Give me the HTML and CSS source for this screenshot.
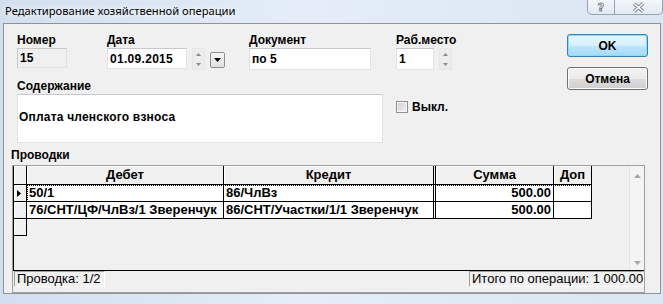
FILE: index.html
```html
<!DOCTYPE html>
<html lang="ru">
  <head>
    <meta charset="UTF-8" />
    <title>Редактирование хозяйственной операции</title>
    <link rel="stylesheet" href="styles.css">
  </head>
  <body>
    <div class="window">
      <div class="titlebar">
        <span class="title">Редактирование хозяйственной операции</span>
        <div class="caption-btns">
          <span class="cap-btn help">?</span>
          <span class="cap-btn close">
            <svg width="13" height="11" viewBox="0 0 13 11">
              <path d="M2 1.5 L11 9.5 M11 1.5 L2 9.5" stroke="#7b8694" stroke-width="3.6" fill="none"/>
              <path d="M2 1.5 L11 9.5 M11 1.5 L2 9.5" stroke="#fff" stroke-width="1.6" fill="none"/>
            </svg>
          </span>
        </div>
      </div>

      <div class="client">
        <div class="head">
          <div class="fields">
            <div class="row-top">
              <div class="field f-num">
                <div class="lbl">Номер</div>
                <div class="box disabled">15</div>
              </div>
              <div class="field f-date">
                <div class="lbl">Дата</div>
                <div class="box">01.09.2015</div>
              </div>
              <div class="spin">
                <span class="spin-btn"><svg width="5" height="3" viewBox="0 0 5 3"><path d="M0 3 L2.5 0 L5 3Z" fill="#8a8a8a"/></svg></span>
                <span class="spin-btn"><svg width="5" height="3" viewBox="0 0 5 3"><path d="M0 0 L5 0 L2.5 3Z" fill="#8a8a8a"/></svg></span>
              </div>
              <div class="drop">
                <svg width="7" height="4" viewBox="0 0 7 4"><path d="M0 0 L7 0 L3.5 4Z" fill="#000"/></svg>
              </div>
              <div class="field f-doc">
                <div class="lbl">Документ</div>
                <div class="box">по 5</div>
              </div>
              <div class="field f-place">
                <div class="lbl">Раб.место</div>
                <div class="box">1</div>
              </div>
              <div class="spin">
                <span class="spin-btn"><svg width="5" height="3" viewBox="0 0 5 3"><path d="M0 3 L2.5 0 L5 3Z" fill="#8a8a8a"/></svg></span>
                <span class="spin-btn"><svg width="5" height="3" viewBox="0 0 5 3"><path d="M0 0 L5 0 L2.5 3Z" fill="#8a8a8a"/></svg></span>
              </div>
            </div>
            <div class="row-content">
              <div class="field f-content">
                <div class="lbl">Содержание</div>
                <div class="box area">Оплата членского взноса</div>
              </div>
              <div class="check">
                <span class="checkbox"></span>
                <span>Выкл.</span>
              </div>
            </div>
          </div>
          <div class="buttons">
            <button class="btn default">OK</button>
            <button class="btn">Отмена</button>
          </div>
        </div>

        <div class="section-label">Проводки</div>

        <div class="grid-panel">
          <div class="grid">
            <div class="table">
              <div class="g-row g-head">
                <div class="ind"></div>
                <div class="cells">
                  <div class="c c-deb">Дебет</div>
                  <div class="c c-cred">Кредит</div>
                  <div class="c c-sum">Сумма</div>
                  <div class="c c-dop">Доп</div>
                </div>
              </div>
              <div class="g-row current">
                <div class="ind">
                  <svg width="4" height="7" viewBox="0 0 4 7"><path d="M0 0 L4 3.5 L0 7Z" fill="#000"/></svg>
                </div>
                <div class="cells">
                  <div class="c c-deb">50/1</div>
                  <div class="c c-cred">86/ЧлВз</div>
                  <div class="c c-sum num">500.00</div>
                  <div class="c c-dop"></div>
                </div>
              </div>
              <div class="g-row">
                <div class="ind"></div>
                <div class="cells">
                  <div class="c c-deb">76/СНТ/ЦФ/ЧлВз/1 Зверенчук</div>
                  <div class="c c-cred">86/СНТ/Участки/1/1 Зверенчук</div>
                  <div class="c c-sum num">500.00</div>
                  <div class="c c-dop"></div>
                </div>
              </div>
              <div class="g-row">
                <div class="ind"></div>
              </div>
            </div>
            <div class="scrollbar">
              <svg width="7" height="4" viewBox="0 0 7 4"><path d="M0 4 L3.5 0 L7 4Z" fill="#a6a6a6"/></svg>
              <svg width="7" height="4" viewBox="0 0 7 4"><path d="M0 0 L7 0 L3.5 4Z" fill="#a6a6a6"/></svg>
            </div>
          </div>
          <div class="statusbar">
            <div class="panel p-left">Проводка: 1/2</div>
            <div class="panel p-right">Итого по операции: 1 000.00</div>
          </div>
        </div>
      </div>
    </div>
  </body>
</html>
```

FILE: styles.css
```css
* {
  box-sizing: border-box;
}
body {
  margin: 0;
  font-family: "Liberation Sans", Arial, sans-serif;
  font-size: 12px;
  color: #000;
  background: #e6eef8;
}
.window {
  width: 663px;
  height: 304px;
  padding: 0 2px 0 3px;
  background: linear-gradient(to right, #d2dfef 0%, #e4edf8 45%, #dbe6f3 100%);
}

/* title bar */
.titlebar {
  display: flex;
  height: 23px;
}
.title {
  font-family: "Noto Sans", sans-serif;
  font-size: 11.2px;
  line-height: 16px;
  padding: 3px 0 0 2px;
  text-shadow: 0 0 6px #fff, 0 0 8px #fff;
}
.caption-btns {
  display: flex;
  margin-left: auto;
  margin-right: -2px;
  height: 15px;
  border: 1px solid #97a3b2;
  border-top: none;
  border-radius: 0 0 5px 5px;
  background: linear-gradient(#f4f7fb, #e2e9f2);
}
.cap-btn {
  display: flex;
  align-items: center;
  justify-content: center;
}
.help {
  width: 27px;
  border-right: 1px solid #97a3b2;
  font-family: "DejaVu Sans", sans-serif;
  font-weight: bold;
  font-size: 11px;
  color: #fff;
  -webkit-text-stroke: 0.8px #6e7a89;
}
.close {
  width: 47px;
}

/* client area */
.client {
  height: 271px;
  border: 1px solid #8e9499;
  background: #f0f0f0;
}
.head {
  display: flex;
  padding: 9px 12px 0 13px;
}
.fields {
  flex: 1;
}
.row-top {
  display: flex;
  align-items: flex-start;
}
.lbl {
  height: 14px;
  line-height: 14px;
  margin-bottom: 1px;
  font-weight: bold;
  white-space: nowrap;
}
.box {
  background: #fff;
  border: 1px solid #e2e3ea;
  border-top-color: #c5c8cf;
  padding: 0 2px;
  font-weight: bold;
  display: flex;
  align-items: center;
}
.box.disabled {
  background: #f0f0f0;
  border-color: #c9c9c9 #e0e0e0 #e0e0e0 #c9c9c9;
}
.f-num { width: 50px; }
.f-num .box { height: 20px; }
.f-date { width: 80px; margin-left: 40px; }
.f-date .box { height: 21px; letter-spacing: 0.3px; }
.f-doc { width: 122px; margin-left: 24px; }
.f-doc .box { height: 22px; }
.f-place { width: 38px; margin-left: 25px; }
.f-place .box { height: 22px; }

.spin {
  display: flex;
  flex-direction: column;
  width: 13px;
  height: 22px;
  margin: 15px 0 0 5px;
  border: 1px solid #e6e6e6;
  background: #ececec;
}
.spin-btn {
  flex: 1;
  display: flex;
  align-items: center;
  justify-content: center;
}
.drop {
  width: 15px;
  height: 16px;
  margin: 19px 0 0 5px;
  border: 1px solid #8e8f8f;
  border-radius: 2px;
  background: linear-gradient(#f7f7f7, #e0e0e0);
  display: flex;
  align-items: center;
  justify-content: center;
}

.row-content {
  display: flex;
  align-items: flex-start;
  margin-top: 9px;
}
.f-content { width: 366px; }
.box.area {
  height: 49px;
  align-items: flex-start;
  padding: 15px 0 0 1px;
  letter-spacing: 0.2px;
}
.check {
  display: flex;
  align-items: center;
  margin: 21px 0 0 13px;
  font-weight: bold;
}
.checkbox {
  width: 12px;
  height: 12px;
  margin-right: 4px;
  border: 1px solid #8e8f8f;
  background: linear-gradient(135deg, #cfcfcf, #f3f3f3);
  box-shadow: inset 0 0 0 1px #f4f4f4;
}

.buttons {
  display: flex;
  flex-direction: column;
  width: 81px;
}
.btn {
  height: 23px;
  font-family: "Liberation Sans", Arial, sans-serif;
  font-size: 12px;
  font-weight: bold;
  color: #000;
  border: 1px solid #707070;
  border-radius: 3px;
  background: linear-gradient(#f2f2f2 0%, #ebebeb 50%, #dddddd 51%, #cfcfcf 100%);
  box-shadow: inset 0 0 0 1px #fbfbfb;
  margin-top: 10px;
  padding: 0;
}
.btn.default {
  margin-top: 1px;
  border-color: #3c7fb1;
  background: linear-gradient(#e9f6fd 0%, #d7effc 50%, #bde6fd 51%, #a6d9f4 100%);
  box-shadow: inset 0 0 0 1px #7ce0f9;
}

.section-label {
  margin: 5px 0 3px;
  padding-left: 7px;
  height: 14px;
  line-height: 14px;
  font-weight: bold;
}

/* grid */
.grid-panel {
  width: 633px;
  height: 128px;
  margin-left: 8px;
  border: 1px solid #a0a0a0;
}
.grid {
  display: flex;
  height: 105px;
  border-left: 1px solid #000;
  border-bottom: 1px solid #000;
}
.table {
  flex: 1;
  font-size: 13px;
  font-weight: bold;
}
.g-row {
  display: flex;
  height: 17px;
}
.g-head {
  height: 19px;
}
.ind {
  width: 13px;
  border-right: 1px solid #000;
  border-bottom: 1px solid #000;
  background: #f0f0f0;
  box-shadow: inset 1px 1px 0 #fff;
  display: flex;
  align-items: center;
  padding-left: 3px;
}
.cells {
  display: flex;
}
.c {
  height: 100%;
  background: #fff;
  border-right: 1px solid #000;
  border-bottom: 1px solid #000;
  padding: 0 2px;
  line-height: 16px;
  white-space: nowrap;
  overflow: hidden;
}
.g-head .c {
  background: #f0f0f0;
  box-shadow: inset 1px 1px 0 #fff;
  text-align: center;
  line-height: 18px;
}
.c-deb { width: 197px; }
.c-cred { width: 212px; border-right: 3px double #000; }
.c-sum { width: 118px; }
.c-dop { width: 38px; }
.num { text-align: right; }
.current .cells {
  outline: 1px dotted #000;
  outline-offset: -1px;
}

.scrollbar {
  width: 15px;
  border-left: 1px solid #e4e4e4;
  background: #f4f4f4;
  display: flex;
  flex-direction: column;
  justify-content: space-between;
  align-items: center;
  padding: 8px 0 5px;
}

.statusbar {
  display: flex;
  justify-content: space-between;
  padding-left: 1px;
  font-size: 13px;
}
.panel {
  height: 16px;
  line-height: 14px;
  padding-left: 2px;
  border: 1px solid;
  border-color: #a0a0a0 #fff #fff #a0a0a0;
  white-space: nowrap;
}
.p-left { width: 91px; }
.p-right { width: 175px; }
```
